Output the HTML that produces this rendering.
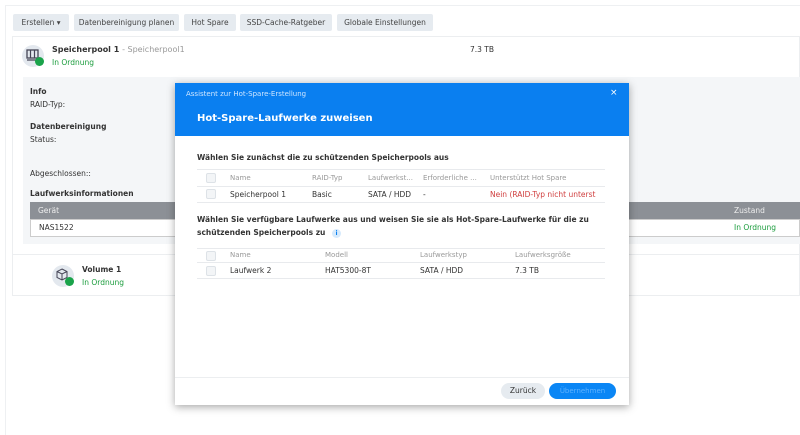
<!DOCTYPE html>
<html><head><meta charset="utf-8"><style>
*{box-sizing:border-box;margin:0;padding:0}
body{width:800px;height:435px;overflow:hidden;background:#fff;font-family:"DejaVu Sans","Liberation Sans",sans-serif;font-size:8px;color:#333;position:relative}
.abs{position:absolute}
.btn{position:absolute;top:14px;height:17px;background:#e6ebf0;border-radius:2px;font-size:7.5px;line-height:17px;text-align:center;color:#444}
.g{color:#1a9c3c}
.bold{font-weight:bold}
.chk{position:absolute;width:10px;height:10px;border:1px solid #dde2e7;background:#f3f5f7;border-radius:2px}
</style></head><body>
<div class="abs" style="left:5px;top:5px;width:795px;height:1px;background:#eef0f2"></div>
<div class="abs" style="left:5px;top:5px;width:1px;height:430px;background:#eef0f2"></div>
<div class="btn" style="left:13px;width:56px">Erstellen ▾</div>
<div class="btn" style="left:74px;width:105px">Datenbereinigung planen</div>
<div class="btn" style="left:184px;width:52px">Hot Spare</div>
<div class="btn" style="left:240px;width:92px">SSD-Cache-Ratgeber</div>
<div class="btn" style="left:337px;width:96px">Globale Einstellungen</div>
<div class="abs" style="left:12px;top:36px;width:788px;height:260px;border:1px solid #eceef0"></div>
<div class="abs" style="left:22px;top:45px;width:22px;height:22px;border-radius:50%;background:#e3e8ee"></div>
<svg class="abs" style="left:26px;top:49px" width="13" height="12" viewBox="0 0 13 12"><rect x="1" y="1" width="11" height="8" fill="none" stroke="#445" stroke-width="1.3"/><path d="M4.5 1v8M8.5 1v8M1 11h11" stroke="#445" stroke-width="1.2"/></svg>
<div class="abs" style="left:35px;top:57px;width:9px;height:9px;border-radius:50%;background:#1aa34a"></div>
<div class="abs bold" style="left:52px;top:45px;font-size:8px">Speicherpool 1 <span style="font-weight:normal;color:#999">- Speicherpool1</span></div>
<div class="abs g" style="left:52px;top:58px;font-size:7.5px">In Ordnung</div>
<div class="abs" style="left:470px;top:45px;font-size:7.5px">7.3 TB</div>
<div class="abs" style="left:23px;top:77px;width:777px;height:167px;background:#f4f6f8"></div>
<div class="abs bold" style="left:30px;top:87px;font-size:7.5px">Info</div>
<div class="abs" style="left:30px;top:100px;font-size:7.5px">RAID-Typ:</div>
<div class="abs bold" style="left:30px;top:122px;font-size:7.5px">Datenbereinigung</div>
<div class="abs" style="left:30px;top:135px;font-size:7.5px">Status:</div>
<div class="abs" style="left:30px;top:169px;font-size:7.5px">Abgeschlossen::</div>
<div class="abs bold" style="left:30px;top:189px;font-size:7.5px">Laufwerksinformationen</div>
<div class="abs" style="left:30px;top:202px;width:770px;height:17px;background:#8c9096;color:#eee;font-size:7.5px;line-height:17px;padding-left:8px">Gerät<span style="position:absolute;left:704px">Zustand</span></div>
<div class="abs" style="left:30px;top:219px;width:770px;height:18px;background:#fff;border:1px solid #ccc;font-size:7.5px;line-height:16px;padding-left:8px">NAS1522<span class="g" style="position:absolute;left:703px">In Ordnung</span></div>
<div class="abs" style="left:12px;top:254px;width:788px;height:1px;background:#eceef0"></div>
<div class="abs" style="left:52px;top:265px;width:22px;height:22px;border-radius:50%;background:#e3e8ee"></div>
<svg class="abs" style="left:56px;top:268px" width="12" height="13" viewBox="0 0 12 13"><path d="M6 1L11 3.5V9.5L6 12L1 9.5V3.5Z M1 3.5L6 6L11 3.5 M6 6V12" fill="none" stroke="#445" stroke-width="1"/></svg>
<div class="abs" style="left:65px;top:277px;width:9px;height:9px;border-radius:50%;background:#1aa34a"></div>
<div class="abs bold" style="left:82px;top:265px;font-size:7.5px">Volume 1</div>
<div class="abs g" style="left:82px;top:278px;font-size:7.5px">In Ordnung</div>

<div class="abs" style="left:175px;top:83px;width:454px;height:322px;background:#fff;box-shadow:0 2px 8px rgba(0,0,0,.35)">
 <div class="abs" style="left:0;top:0;width:454px;height:53px;background:#0a7ff0;color:#fff">
  <div class="abs" style="left:11px;top:7px;font-size:7px;color:#cfe6ff">Assistent zur Hot-Spare-Erstellung</div>
  <div class="abs" style="left:435px;top:5px;font-size:9px">×</div>
  <div class="abs bold" style="left:22px;top:30px;font-size:10px">Hot-Spare-Laufwerke zuweisen</div>
 </div>
 <div class="abs bold" style="left:22px;top:70px;font-size:7.5px">Wählen Sie zunächst die zu schützenden Speicherpools aus</div>
 <div class="abs" style="left:22px;top:86px;width:408px;height:1px;background:#e8eaed"></div>
 <div class="abs" style="left:22px;top:103px;width:408px;height:1px;background:#e8eaed"></div>
 <div class="abs" style="left:22px;top:119px;width:408px;height:1px;background:#e8eaed"></div>
 <div class="chk" style="left:31px;top:90px"></div><div class="chk" style="left:31px;top:106px"></div>
 <div class="abs" style="left:55px;top:91px;font-size:7px;color:#999;white-space:nowrap">Name<span style="position:absolute;left:82px">RAID-Typ</span><span style="position:absolute;left:138px">Laufwerkst...</span><span style="position:absolute;left:193px">Erforderliche ...</span><span style="position:absolute;left:260px">Unterstützt Hot Spare</span></div>
 <div class="abs" style="left:55px;top:107px;font-size:7.5px;color:#333;white-space:nowrap">Speicherpool 1<span style="position:absolute;left:82px">Basic</span><span style="position:absolute;left:138px">SATA / HDD</span><span style="position:absolute;left:193px">-</span><span style="position:absolute;left:260px;color:#d04040">Nein (RAID-Typ nicht unterst</span></div>
 <div class="abs bold" style="left:22px;top:130px;font-size:7.5px;line-height:13px;width:420px">Wählen Sie verfügbare Laufwerke aus und weisen Sie sie als Hot-Spare-Laufwerke für die zu schützenden Speicherpools zu <span style="display:inline-block;width:9px;height:9px;border-radius:50%;background:#d6eafc;color:#0a7ff0;font-size:6px;text-align:center;line-height:9px;margin-left:4px">i</span></div>
 <div class="abs" style="left:22px;top:165px;width:408px;height:1px;background:#e8eaed"></div>
 <div class="abs" style="left:22px;top:179px;width:408px;height:1px;background:#e8eaed"></div>
 <div class="abs" style="left:22px;top:195px;width:408px;height:1px;background:#e8eaed"></div>
 <div class="chk" style="left:31px;top:168px"></div><div class="chk" style="left:31px;top:183px"></div>
 <div class="abs" style="left:55px;top:168px;font-size:7px;color:#999;white-space:nowrap">Name<span style="position:absolute;left:95px">Modell</span><span style="position:absolute;left:190px">Laufwerkstyp</span><span style="position:absolute;left:285px">Laufwerksgröße</span></div>
 <div class="abs" style="left:55px;top:183px;font-size:7.5px;white-space:nowrap">Laufwerk 2<span style="position:absolute;left:95px">HAT5300-8T</span><span style="position:absolute;left:190px">SATA / HDD</span><span style="position:absolute;left:285px">7.3 TB</span></div>
 <div class="abs" style="left:0;top:294px;width:454px;height:1px;background:#eceef0"></div>
 <div class="abs" style="left:326px;top:300px;width:44px;height:16px;border-radius:8px;background:#e6ebf0;font-size:7.5px;line-height:16px;text-align:center">Zurück</div>
 <div class="abs" style="left:374px;top:300px;width:67px;height:16px;border-radius:8px;background:#0a86f5;color:#5fb2ff;font-size:7px;line-height:16px;text-align:center">Übernehmen</div>
</div>
</body></html>
